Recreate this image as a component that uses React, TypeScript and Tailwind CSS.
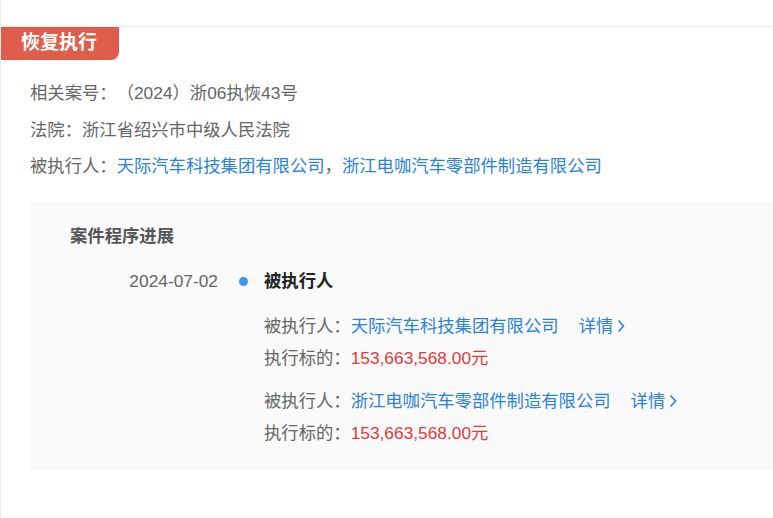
const font = "font-['Liberation_Sans','Noto_Sans_CJK_SC',sans-serif]";

const parties = [
  { name: "天际汽车科技集团有限公司", amount: "153,663,568.00元" },
  { name: "浙江电咖汽车零部件制造有限公司", amount: "153,663,568.00元" },
];

function Chevron() {
  return (
    <svg width="10" height="16" viewBox="0 0 10 16" className="ml-[3px]">
      <path d="M2.5 2.5 L7.5 8 L2.5 13.5" fill="none" stroke="currentColor" strokeWidth="1.6" />
    </svg>
  );
}

export default function App() {
  return (
    <div
      className={`w-[773px] h-[518px] bg-white border-l border-[#ececec] overflow-hidden text-[17.33px] text-[#666] [text-spacing-trim:space-all] ${font}`}
    >
      {/* top rule */}
      <div className="h-[27px] border-b border-[#efefef]" />

      {/* tag */}
      <div className="h-[33px] w-[118px] bg-[#e05d4b] rounded-br-[8px] flex items-center pl-[20px] text-white font-bold text-[19px]">
        恢复执行
      </div>

      {/* basic info */}
      <div className="pl-[29px] mt-[16px]">
        <div className="h-[36.5px] flex items-center">相关案号：（2024）浙06执恢43号</div>
        <div className="h-[36.5px] flex items-center">法院：浙江省绍兴市中级人民法院</div>
        <div className="h-[36.5px] flex items-center">
          被执行人：
          <span className="text-[#2b82d9]">天际汽车科技集团有限公司</span>，
          <span className="text-[#2b82d9]">浙江电咖汽车零部件制造有限公司</span>
        </div>
      </div>

      {/* progress box */}
      <div className="ml-[29px] mt-[16px] h-[268px] bg-[#fafafa] pt-[22px]">
        <div className="pl-[40px] leading-[24px] font-bold text-[#555]">案件程序进展</div>

        <div className="mt-[22px] flex items-center h-[24px]">
          <div className="w-[188px] text-right text-[#666]">2024-07-02</div>
          <div className="ml-[21px] w-[9px] h-[9px] rounded-full bg-[#3d95f2]" />
          <div className="ml-[16px] font-bold text-[#222]">被执行人</div>
        </div>

        <div className="mt-[17px] pl-[234px] flex flex-col gap-[11px]">
          {parties.map((p) => (
            <div key={p.name}>
              <div className="h-[32px] flex items-center">
                被执行人：<span className="text-[#2b82d9]">{p.name}</span>
                <span className="ml-[20px] flex items-center text-[#2b82d9]">
                  详情
                  <Chevron />
                </span>
              </div>
              <div className="h-[32px] flex items-center">
                执行标的：<span className="text-[#e4393c]">{p.amount}</span>
              </div>
            </div>
          ))}
        </div>
      </div>
    </div>
  );
}
